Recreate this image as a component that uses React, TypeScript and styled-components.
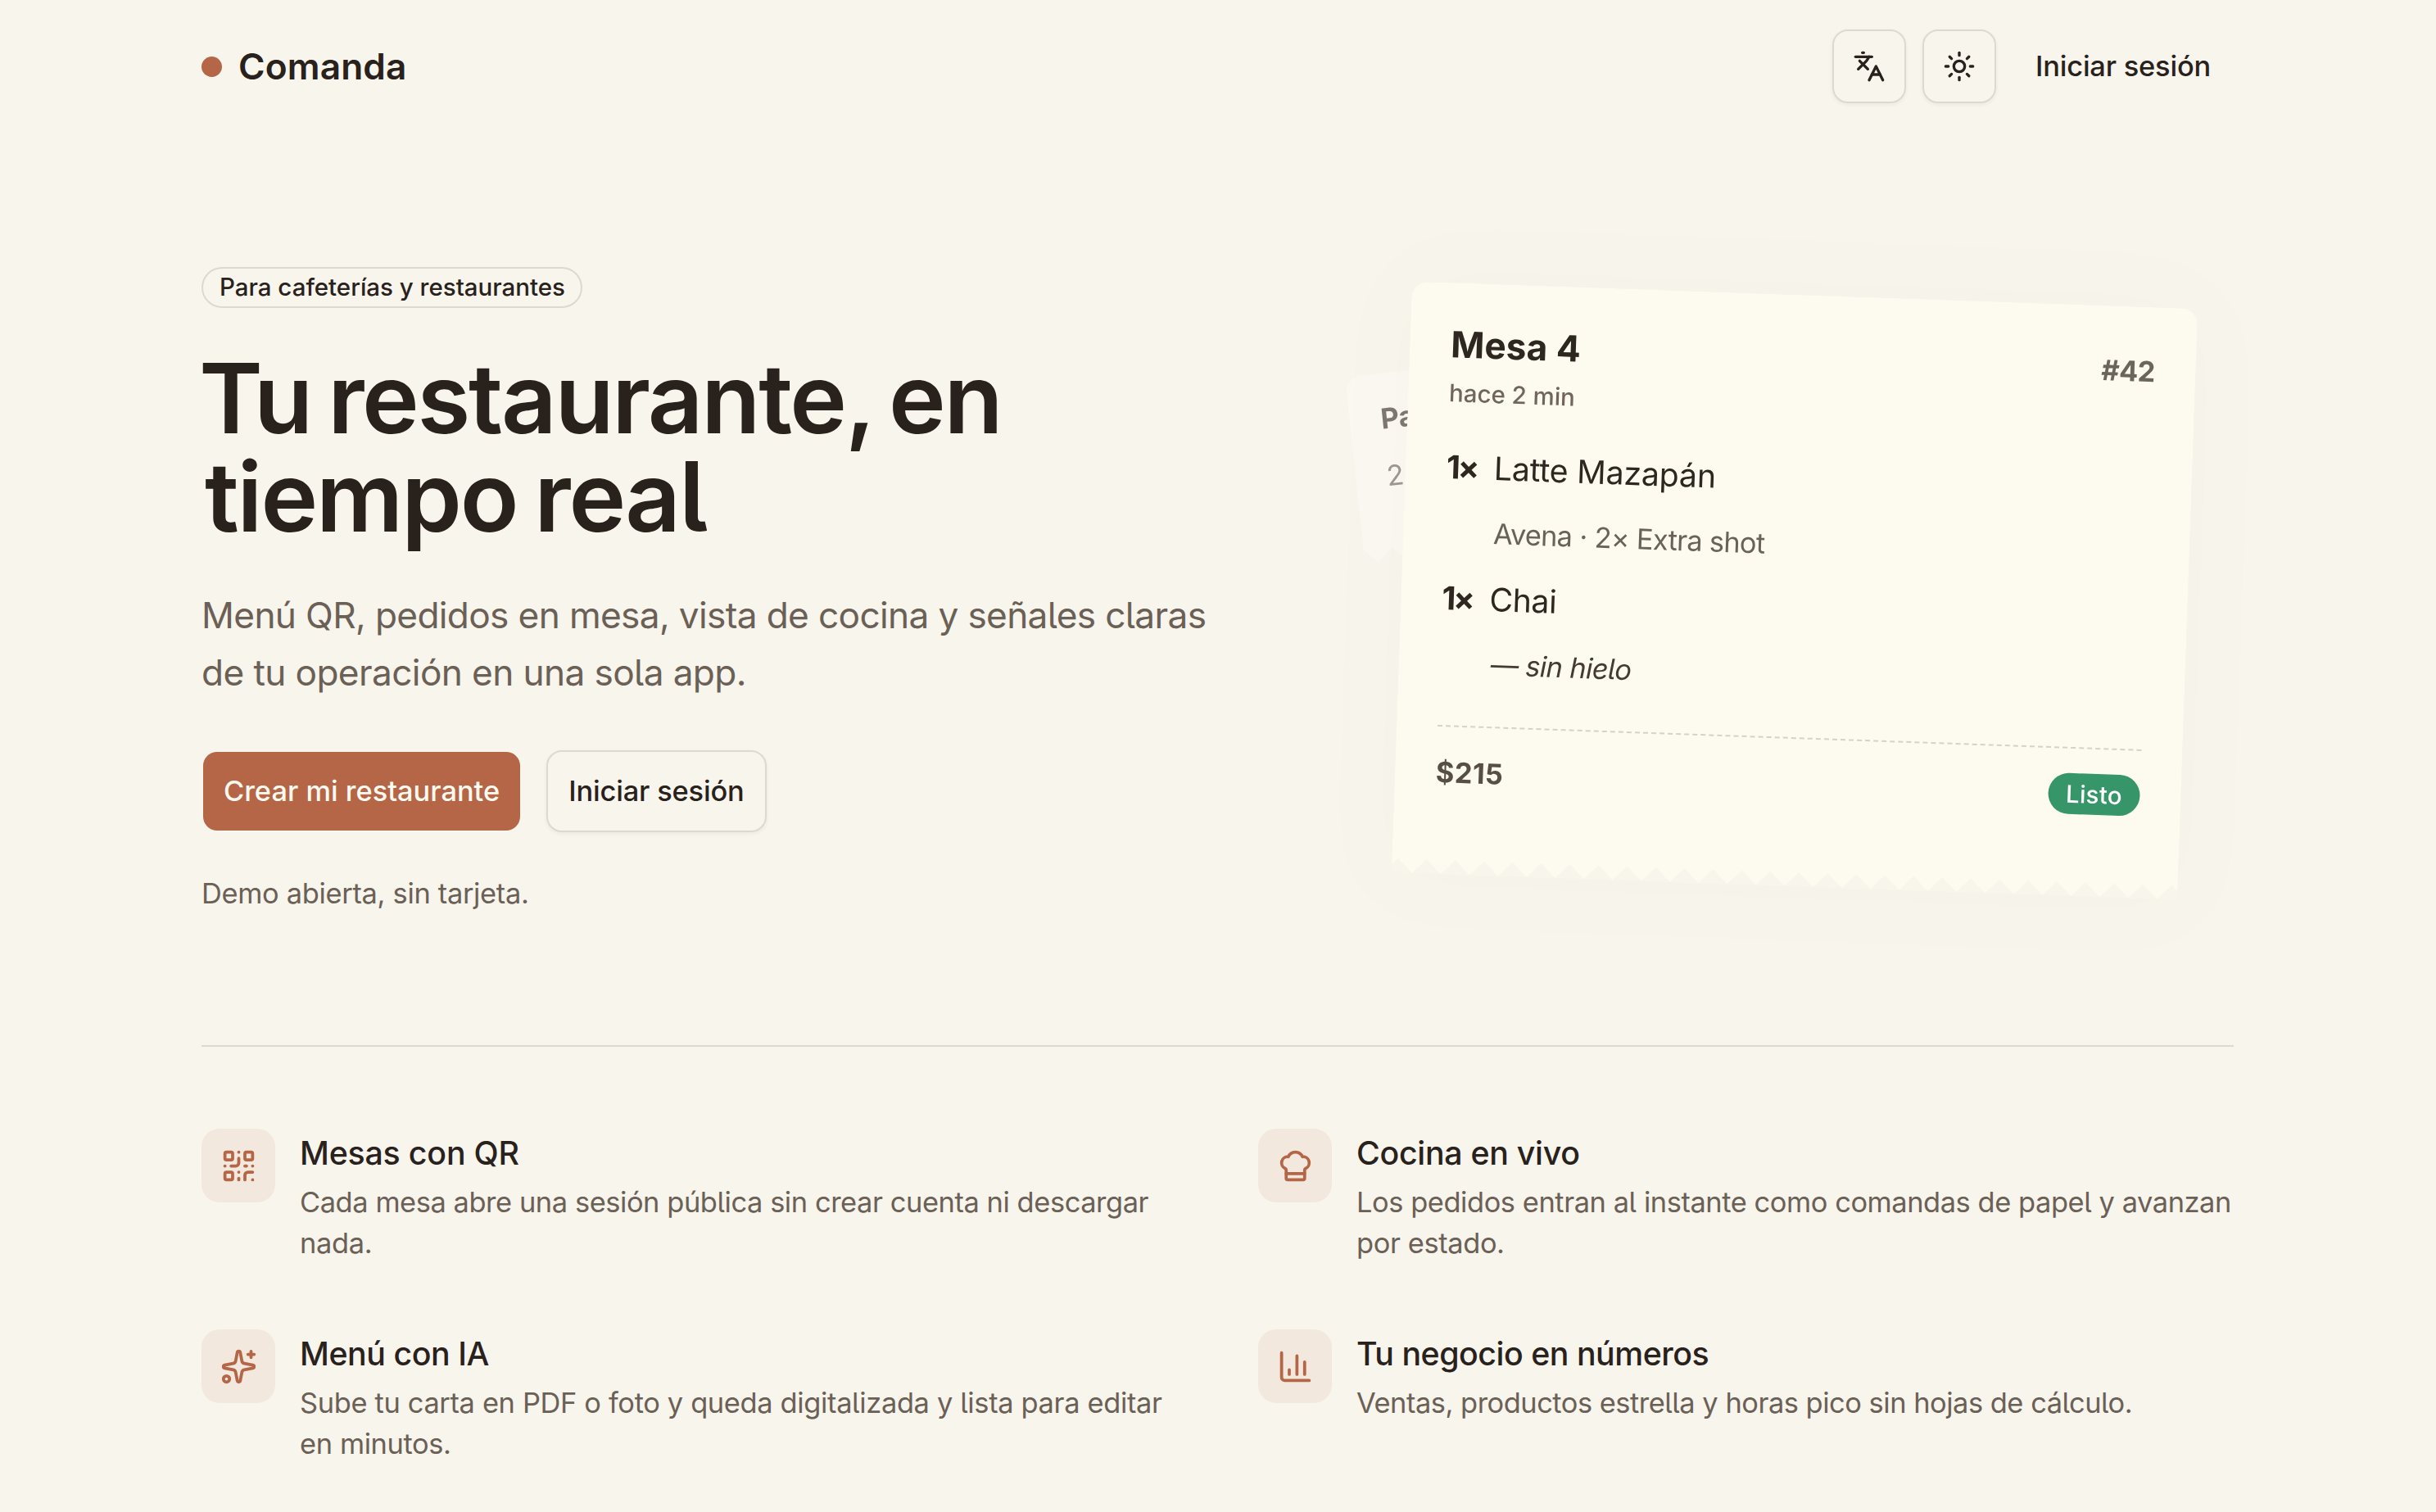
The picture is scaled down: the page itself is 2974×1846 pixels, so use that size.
import React from "react";
import styled, { createGlobalStyle, css } from "styled-components";
import { ChartColumn, ChefHat, Languages, QrCode, Sparkles, Sun, type LucideIcon } from "lucide-react";

const color = {
  page: "#f8f5ed",
  ink: "#29211c",
  muted: "#6b6056",
  line: "#dcd9d1",
  accent: "#b46646",
  accentSoft: "#f2e8de",
  paper: "#fdfbef",
  paperInk: "#2e2620",
  ready: "#36966a",
};

const GlobalStyle = createGlobalStyle`
  *, *::before, *::after { box-sizing: border-box; }
  body {
    margin: 0;
    background: ${color.page};
    color: ${color.ink};
    font-family: Inter, "Liberation Sans", sans-serif;
    font-feature-settings: "cv05";
    -webkit-font-smoothing: antialiased;
  }
  h1, h2, h3, p { margin: 0; font-weight: inherit; }
`;

/* One line of copy; $track is its letter spacing in thousandths of an em. */
const Line = styled.span<{ $track?: number }>`
  display: block;
  white-space: nowrap;
  letter-spacing: ${({ $track = 0 }) => $track / 1000}em;
`;

const Page = styled.div`
  min-height: 1846px;
  padding: 0 247px 0 246px;
  overflow: hidden;
`;

const Header = styled.header`
  display: flex;
  align-items: center;
  justify-content: space-between;
  height: 162px;
`;

const Brand = styled.div`
  display: flex;
  align-items: center;
  gap: 20px;
  font-size: 44.2px;
  font-weight: 600;
  line-height: 60px;
`;

const BrandDot = styled.span`
  width: 25px;
  height: 25px;
  border-radius: 50%;
  background: ${color.accent};
`;

const Nav = styled.nav`
  display: flex;
  align-items: center;
  gap: 20px;
`;

const outlined = css`
  border: 2px solid ${color.line};
  box-shadow: 0 2px 5px rgba(40, 30, 20, 0.06);
`;

const buttonBase = css`
  display: inline-flex;
  align-items: center;
  justify-content: center;
  padding: 0;
  border: 0;
  background: transparent;
  color: ${color.ink};
  font: inherit;
  font-feature-settings: inherit;
`;

const IconButton = styled.button`
  ${buttonBase}
  ${outlined}
  width: 90px;
  height: 90px;
  border-radius: 19px;
`;

const GhostButton = styled.button`
  ${buttonBase}
  height: 90px;
  padding: 0 28px 2px;
  font-size: 34.4px;
  font-weight: 500;
`;

const Hero = styled.section`
  display: flex;
  align-items: center;
  justify-content: space-between;
  padding: 164px 0 160px;
  border-bottom: 2px solid ${color.line};
`;

const HeroCopy = styled.div`
  display: flex;
  flex-direction: column;
  align-items: flex-start;
`;

const Badge = styled.div`
  display: flex;
  align-items: center;
  height: 50px;
  padding: 0 19px 2px 20px;
  border: 2px solid ${color.line};
  border-radius: 25px;
  font-size: 29.5px;
  font-weight: 500;
`;

const Headline = styled.h1`
  margin-top: 50px;
  margin-left: -3px;
  font-size: 118px;
  font-weight: 600;
  line-height: 120px;
  word-spacing: -0.06em;
`;

const IndentedLine = styled(Line)`
  padding-left: 7px;
`;

const Lead = styled.p`
  margin-top: 50px;
  color: ${color.muted};
  font-size: 44.2px;
  line-height: 70px;
`;

const Actions = styled.div`
  display: flex;
  gap: 30px;
  margin-top: 60px;
`;

const ActionButton = styled.button<{ $primary?: boolean }>`
  ${buttonBase}
  height: 100px;
  padding: 0 25px 1px;
  border-radius: 19px;
  font-size: 34.4px;
  font-weight: 500;
  ${({ $primary }) =>
    $primary
      ? css`
          border: 2px solid transparent;
          background: ${color.accent};
          background-clip: padding-box;
          color: #fcf9f1;
        `
      : outlined}
`;

const Note = styled.p`
  margin-top: 50px;
  color: ${color.muted};
  font-size: 34.4px;
  line-height: 50px;
`;

const Stage = styled.div`
  display: flex;
  justify-content: center;
  width: 1072px;
`;

const TicketStack = styled.div`
  position: relative;
  width: 960px;
`;

const tornEdge = css`
  border-radius: 20px 20px 0 0;
  background: ${color.paper};
  color: ${color.paperInk};
  mask: conic-gradient(from -45deg at bottom, #0000, #000 1deg 89deg, #0000 90deg) 50% / 35px 100%;
`;

const BackTicket = styled.div`
  ${tornEdge}
  position: absolute;
  left: -69px;
  top: 100px;
  width: 665px;
  height: 230px;
  padding: 31px 38px;
  background: #fdfaf4;
  opacity: 0.6;
  transform: rotate(-6deg);
  transform-origin: 0 0;
  font-size: 34.4px;
  line-height: 50px;
`;

const BackTitle = styled.div`
  font-weight: 700;
`;

const BackItem = styled.div`
  margin-top: 20px;
  opacity: 0.75;
`;

const TicketShadow = styled.div`
  position: relative;
  transform: rotate(2deg);
  border-radius: 20px 20px 0 0;
  box-shadow: 0 0 120px 40px rgba(90, 70, 110, 0.012);
`;

const Ticket = styled.article`
  ${tornEdge}
  height: 722px;
  padding: 45px 50px 0;
`;

const TicketHead = styled.div`
  display: flex;
  align-items: baseline;
  justify-content: space-between;
`;

const TableName = styled.h2`
  font-size: 44.2px;
  font-weight: 700;
  line-height: 60px;
`;

const Elapsed = styled.div`
  margin-top: 9px;
  color: #70665d;
  font-size: 29.5px;
  font-weight: 500;
  line-height: 40px;
`;

const OrderNumber = styled.div`
  color: #6c655c;
  font-size: 34.4px;
  font-weight: 700;
`;

const Items = styled.div`
  display: flex;
  flex-direction: column;
  gap: 25px;
  margin-top: 41px;
`;

const Item = styled.div`
  display: flex;
  font-size: 39.3px;
  line-height: 60px;
`;

const Quantity = styled.b`
  flex: none;
  width: 58px;
  font-weight: 700;
`;

const Modifier = styled.div<{ $note?: boolean }>`
  padding-left: ${({ $note }) => ($note ? 62 : 60)}px;
  color: ${({ $note }) => ($note ? "#433b34" : "#68625a")};
  font-size: 34.4px;
  font-style: ${({ $note }) => ($note ? "italic" : "normal")};
  line-height: 50px;
`;

const TicketFoot = styled.div`
  display: flex;
  align-items: center;
  justify-content: space-between;
  margin-top: 50px;
  padding-top: 30px;
  border-top: 2px dashed #d5d2c8;
`;

const Total = styled.div`
  color: #574f47;
  font-size: 34.4px;
  font-weight: 700;
`;

const Status = styled.div`
  display: flex;
  align-items: center;
  justify-content: center;
  width: 112px;
  height: 50px;
  border-radius: 25px;
  background: ${color.ready};
  color: #fff;
  font-size: 29.5px;
  font-weight: 500;
`;

const Features = styled.section`
  display: grid;
  grid-template-columns: 1fr 1fr;
  gap: 80px 99px;
  padding-top: 100px;
`;

const Feature = styled.article`
  display: flex;
  align-items: flex-start;
  gap: 30px;
`;

const FeatureIcon = styled.div`
  display: flex;
  flex: none;
  align-items: center;
  justify-content: center;
  width: 90px;
  height: 90px;
  border-radius: 22px;
  background: ${color.accentSoft};
  color: ${color.accent};
`;

const FeatureTitle = styled.h3`
  font-size: 39.3px;
  font-weight: 500;
  line-height: 60px;
`;

const FeatureText = styled.p`
  margin-top: 5px;
  color: ${color.muted};
  font-size: 34.4px;
  line-height: 50px;
`;

type Copy = { text: string; track: number };

const features: { icon: LucideIcon; title: Copy; lines: Copy[] }[] = [
  {
    icon: QrCode,
    title: { text: "Mesas con QR", track: -5.1 },
    lines: [
      { text: "Cada mesa abre una sesión pública sin crear cuenta ni descargar", track: -12.2 },
      { text: "nada.", track: -9 },
    ],
  },
  {
    icon: ChefHat,
    title: { text: "Cocina en vivo", track: -7.5 },
    lines: [
      { text: "Los pedidos entran al instante como comandas de papel y avanzan", track: -12.3 },
      { text: "por estado.", track: -11 },
    ],
  },
  {
    icon: Sparkles,
    title: { text: "Menú con IA", track: -11.5 },
    lines: [
      { text: "Sube tu carta en PDF o foto y queda digitalizada y lista para editar", track: -9.8 },
      { text: "en minutos.", track: -11 },
    ],
  },
  {
    icon: ChartColumn,
    title: { text: "Tu negocio en números", track: -12.3 },
    lines: [{ text: "Ventas, productos estrella y horas pico sin hojas de cálculo.", track: -13.7 }],
  },
];

export default function App() {
  return (
    <>
      <GlobalStyle />
      <Page>
        <Header>
          <Brand>
            <BrandDot />
            <Line $track={3}>Comanda</Line>
          </Brand>
          <Nav>
            <IconButton aria-label="Idioma">
              <Languages size={40} strokeWidth={2} />
            </IconButton>
            <IconButton aria-label="Tema">
              <Sun size={40} strokeWidth={2} />
            </IconButton>
            <GhostButton>
              <Line $track={-5.6}>Iniciar sesión</Line>
            </GhostButton>
          </Nav>
        </Header>

        <Hero>
          <HeroCopy>
            <Badge>
              <Line $track={-0.5}>Para cafeterías y restaurantes</Line>
            </Badge>
            <Headline>
              <Line $track={-19.6}>Tu restaurante, en</Line>
              <IndentedLine $track={-17.5}>tiempo real</IndentedLine>
            </Headline>
            <Lead>
              <Line $track={-14.7}>Menú QR, pedidos en mesa, vista de cocina y señales claras</Line>
              <Line $track={-14}>de tu operación en una sola app.</Line>
            </Lead>
            <Actions>
              <ActionButton $primary>
                <Line>Crear mi restaurante</Line>
              </ActionButton>
              <ActionButton>
                <Line $track={-4.5}>Iniciar sesión</Line>
              </ActionButton>
            </Actions>
            <Note>
              <Line $track={-8.9}>Demo abierta, sin tarjeta.</Line>
            </Note>
          </HeroCopy>

          <Stage>
            <TicketStack>
              <BackTicket>
                <BackTitle>Para</BackTitle>
                <BackItem>2×</BackItem>
              </BackTicket>
              <TicketShadow>
                <Ticket>
                  <TicketHead>
                    <TableName>
                      <Line $track={2.4}>Mesa 4</Line>
                    </TableName>
                    <OrderNumber>
                      <Line $track={-20}>#42</Line>
                    </OrderNumber>
                  </TicketHead>
                  <Elapsed>
                    <Line $track={-1}>hace 2 min</Line>
                  </Elapsed>
                  <Items>
                    <Item>
                      <Quantity>
                        <Line $track={-80}>1×</Line>
                      </Quantity>
                      <Line $track={-5}>Latte Mazapán</Line>
                    </Item>
                    <Modifier>
                      <Line $track={-20.1}>Avena · 2× Extra shot</Line>
                    </Modifier>
                    <Item>
                      <Quantity>
                        <Line $track={-80}>1×</Line>
                      </Quantity>
                      <Line $track={-10.3}>Chai</Line>
                    </Item>
                    <Modifier $note>
                      <Line $track={-18.1}>— sin hielo</Line>
                    </Modifier>
                  </Items>
                  <TicketFoot>
                    <Total>
                      <Line $track={9.5}>$215</Line>
                    </Total>
                    <Status>
                      <Line $track={8}>Listo</Line>
                    </Status>
                  </TicketFoot>
                </Ticket>
              </TicketShadow>
            </TicketStack>
          </Stage>
        </Hero>

        <Features>
          {features.map(({ icon: Icon, title, lines }) => (
            <Feature key={title.text}>
              <FeatureIcon>
                <Icon size={45} strokeWidth={2} />
              </FeatureIcon>
              <div>
                <FeatureTitle>
                  <Line $track={title.track}>{title.text}</Line>
                </FeatureTitle>
                <FeatureText>
                  {lines.map((line) => (
                    <Line key={line.text} $track={line.track}>
                      {line.text}
                    </Line>
                  ))}
                </FeatureText>
              </div>
            </Feature>
          ))}
        </Features>
      </Page>
    </>
  );
}
